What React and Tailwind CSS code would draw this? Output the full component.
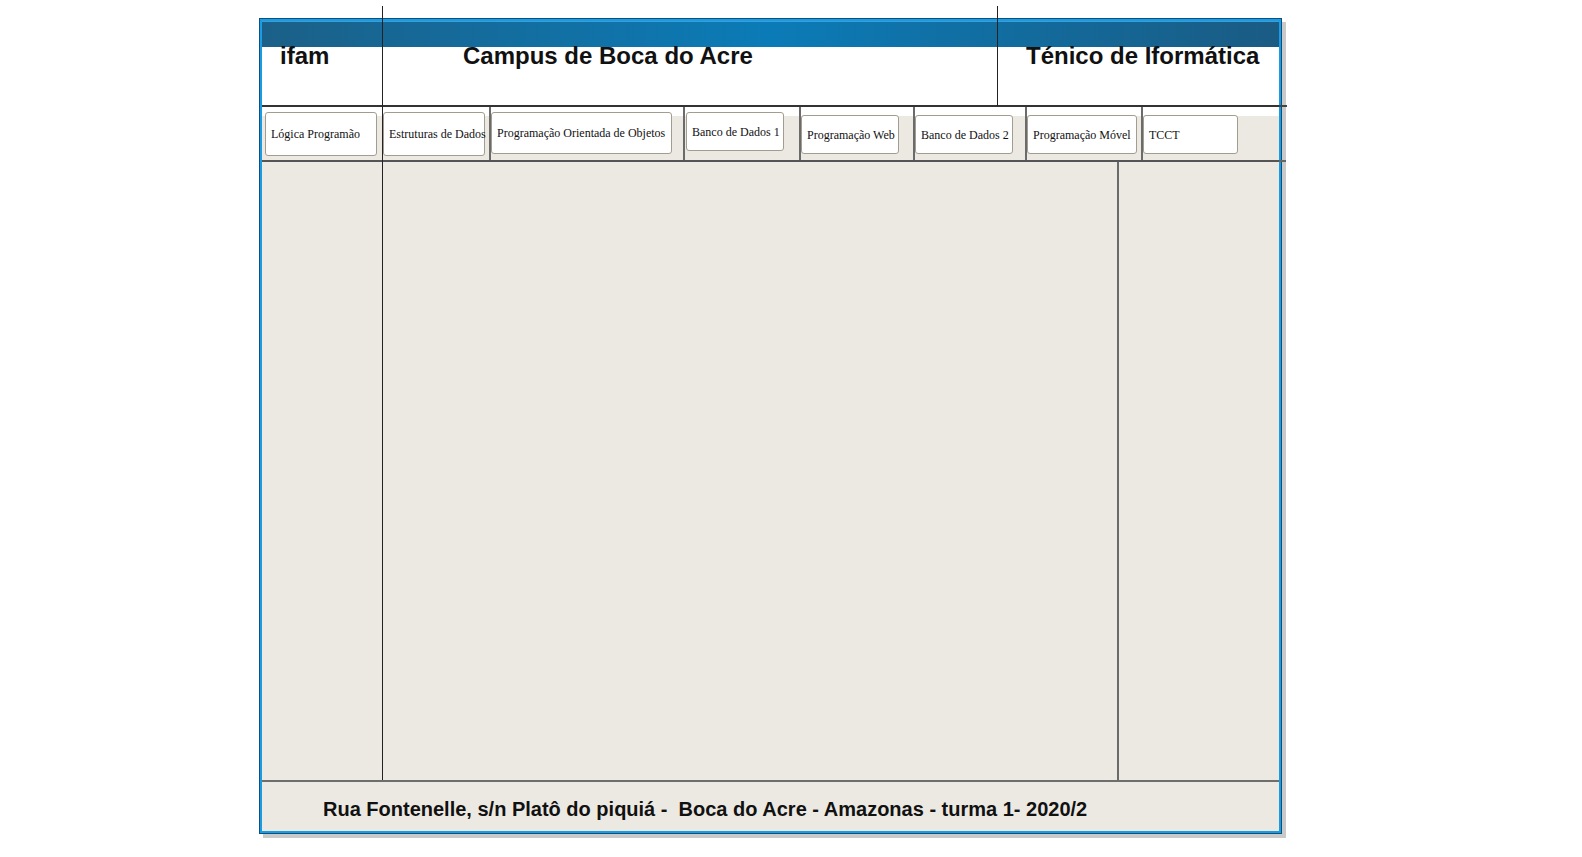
import React from "react";

const navCells = [
  { w: "w-[120px]", sep: false, ml: "ml-[3px]", mt: "mt-[5px]", bw: "w-[112px]", bh: "h-[44px]", label: "Lógica Programão" },
  { w: "w-[107px]", sep: false, ml: "ml-[1px]", mt: "mt-[5px]", bw: "w-[102px]", bh: "h-[44px]", label: "Estruturas de Dados" },
  { w: "w-[194px]", sep: true, ml: "ml-0", mt: "mt-[5px]", bw: "w-[181px]", bh: "h-[42px]", label: "Programação Orientada de Objetos" },
  { w: "w-[116px]", sep: true, ml: "ml-[1px]", mt: "mt-[5px]", bw: "w-[98px]", bh: "h-[39px]", label: "Banco de Dados 1" },
  { w: "w-[114px]", sep: true, ml: "ml-0", mt: "mt-[8px]", bw: "w-[98px]", bh: "h-[39px]", label: "Programação Web" },
  { w: "w-[112px]", sep: true, ml: "ml-0", mt: "mt-[8px]", bw: "w-[98px]", bh: "h-[39px]", label: "Banco de Dados 2" },
  { w: "w-[116px]", sep: true, ml: "ml-0", mt: "mt-[8px]", bw: "w-[110px]", bh: "h-[39px]", label: "Programação Móvel" },
  { w: "flex-1", sep: true, ml: "ml-0", mt: "mt-[8px]", bw: "w-[95px]", bh: "h-[39px]", label: "TCCT" },
];

export default function App() {
  return (
    <div className="relative w-[1582px] h-[857px] bg-white overflow-hidden font-['Liberation_Sans',Arial,sans-serif]">
      <div className="pl-[259px] pt-[18px]">
        <div className="w-[1023px] h-[816px] border border-[#0f4f7c] shadow-[4px_4px_0_#c9c9c9]">
          <div className="h-full border-2 border-[#1a9ce4] flex flex-col bg-[#ece9e3]">
            {/* header */}
            <div className="h-[84px] bg-white flex flex-col">
              <div className="h-[26px] border-t border-[#3a9fd6] bg-[linear-gradient(to_right,#1b6088,#0b7bb7_50%,#1a5b83)]" />
              <div className="flex text-[24px] leading-[18px] font-bold text-[#111]">
                <div className="w-[120px] pl-[18px]">ifam</div>
                <div className="w-[615px] pl-[81px]">Campus de Boca do Acre</div>
                <div className="flex-1 pl-[29px]">Ténico de Iformática</div>
              </div>
            </div>
            <div className="h-[2px] bg-[#333333]" />
            {/* nav */}
            <div className="h-[53px] flex bg-[linear-gradient(to_bottom,#ffffff_0,#ffffff_9px,#ece9e3_9px)]">
              {navCells.map((c, i) => (
                <div
                  key={i}
                  className={`${c.w} h-full ${c.sep ? "border-l-2 border-[#6b6b6b]" : ""}`}
                >
                  <div
                    className={`${c.ml} ${c.mt} ${c.bw} ${c.bh} bg-white border border-[#a39d90] rounded-[3px] flex items-center pl-[5px] whitespace-nowrap font-['Liberation_Serif','Times_New_Roman',serif] text-[12px] text-[#111]`}
                  >
                    {c.label}
                  </div>
                </div>
              ))}
            </div>
            <div className="h-[2px] bg-[#555555]" />
            {/* main */}
            <div className="h-[618px] flex">
              <div className="w-[857px] h-full border-r-2 border-[#6b6b6b]" />
              <div className="flex-1" />
            </div>
            <div className="h-[2px] bg-[#6e6e6e]" />
            {/* footer */}
            <div className="flex-1 pl-[61px] pt-[17px] text-[20px] leading-[20px] font-bold text-[#111] whitespace-pre">
              Rua Fontenelle, s/n Platô do piquiá -  Boca do Acre - Amazonas - turma 1- 2020/2
            </div>
          </div>
        </div>
      </div>

      {/* overlay guide lines crossing the frame */}
      <div className="absolute left-[382px] top-[6px] w-[1px] h-[774px] bg-[#222222]" />
      <div className="absolute left-[997px] top-[6px] w-[1px] h-[100px] bg-[#222222]" />
      <div className="absolute left-[1279px] top-[105px] w-[8px] h-[2px] bg-[#444444]" />
      <div className="absolute left-[1279px] top-[160px] w-[7px] h-[2px] bg-[#666666]" />
    </div>
  );
}
